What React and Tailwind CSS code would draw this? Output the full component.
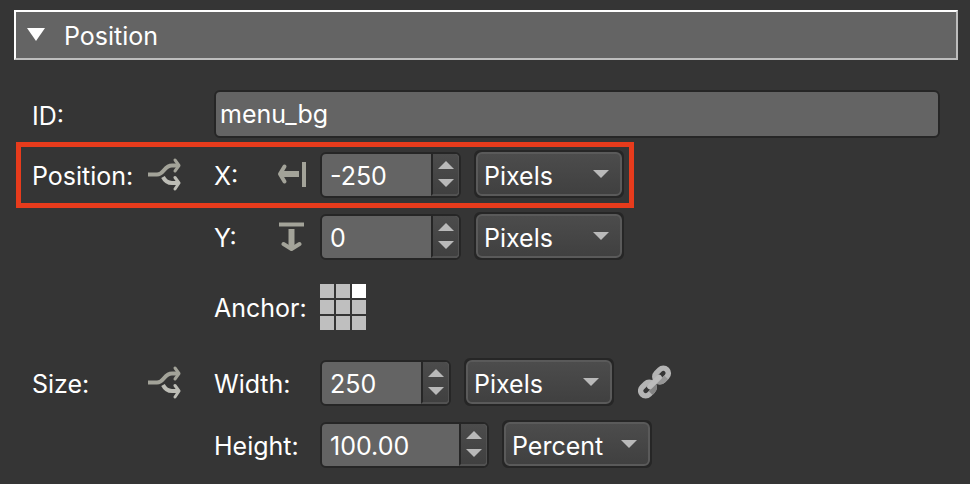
import React, { useId, useState } from 'react';

const ANCHORS = [
  'Top left', 'Top', 'Top right',
  'Left', 'Center', 'Right',
  'Bottom left', 'Bottom', 'Bottom right',
];

function BranchIcon() {
  return (
    <svg viewBox="0 0 34 34" className="w-[34px] h-[34px]" fill="none" aria-hidden="true">
      <path d="M15 20c2 4 5 6 9 6h6" stroke="#bdbdb6" strokeWidth="4" />
      <path d="M27 20.500l4 5.500-4 6" stroke="#bdbdb6" strokeWidth="3" strokeLinecap="round" strokeLinejoin="round" />
      <path d="M0 17.500h9c7 0 7-9 15-9h6" stroke="#a3a399" strokeWidth="4" />
      <path d="M27 3l4 5.500-4 5.500" stroke="#a3a399" strokeWidth="3" strokeLinecap="round" strokeLinejoin="round" />
    </svg>
  );
}

function OffsetIcon({ axis }) {
  return (
    <svg viewBox="0 0 30 30" className="w-[30px] h-[30px]" fill="none" stroke="#a3a399" aria-hidden="true">
      {axis === 'x' ? (
        <>
          <path d="M27 3v25" strokeWidth="4" />
          <path d="M22 15H4" strokeWidth="6" />
          <path d="M7.500 7.500L3 15l4.500 7.500" strokeWidth="4" strokeLinecap="round" strokeLinejoin="round" />
        </>
      ) : (
        <>
          <path d="M2 3.500h25" strokeWidth="4" />
          <path d="M14.500 8v19" strokeWidth="6" />
          <path d="M6.500 23l8 5 8-5" strokeWidth="4" strokeLinecap="round" strokeLinejoin="round" />
        </>
      )}
    </svg>
  );
}

function ChainIcon() {
  return (
    <svg viewBox="0 0 34 34" className="w-[34px] h-[34px]" fill="none" aria-hidden="true">
      <g transform="rotate(-45 16.500 17)" strokeWidth="5.500">
        <rect x="-1" y="12" width="15" height="10" rx="5" stroke="#b4b4b4" />
        <path d="M6 22h3a5 5 0 0 0 5-5" stroke="#858585" />
        <rect x="19" y="12" width="15" height="10" rx="5" stroke="#b4b4b4" />
        <path d="M28 22h-4a5 5 0 0 1-5-5" stroke="#969696" />
        <path d="M10 17h13" stroke="#bcbcbc" strokeLinecap="round" />
      </g>
    </svg>
  );
}

function SpinBox({ id, initial, decimals = 0, inputClass }) {
  const [value, setValue] = useState(initial);
  const step = (delta) => setValue((v) => ((Number(v) || 0) + delta).toFixed(decimals));

  return (
    <div className="flex h-[46px] shrink-0 overflow-hidden rounded-md border-2 border-[#262626] bg-[#646464]">
      <input
        id={id}
        type="text"
        inputMode="decimal"
        value={value}
        onChange={(e) => setValue(e.target.value)}
        className={`min-w-0 bg-transparent pt-1 pl-2 outline-none ${inputClass}`}
      />
      <div className="flex w-7 flex-col rounded-r-sm border-l-2 border-l-[#262626] border-r border-b-2 border-r-[#525252] border-b-[#525252] bg-linear-to-b from-[#4c4c4c] to-[#404040]">
        <button type="button" aria-label="Increase" onClick={() => step(1)} className="flex flex-1 items-end justify-center pb-[3px]">
          <svg viewBox="0 0 16 8" className="h-2 w-4" fill="#b9b9b9" aria-hidden="true">
            <path d="M0 8L8 0l8 8z" />
          </svg>
        </button>
        <button type="button" aria-label="Decrease" onClick={() => step(-1)} className="flex flex-1 items-start justify-center pt-[7px]">
          <svg viewBox="0 0 16 8" className="h-2 w-4" fill="#b9b9b9" aria-hidden="true">
            <path d="M0 0l8 8 8-8z" />
          </svg>
        </button>
      </div>
    </div>
  );
}

function UnitSelect({ label, initial }) {
  return (
    <div className="relative ml-[13px] h-12 w-[150px] shrink-0 rounded-md border-2 border-[#262626] bg-[#262626]">
      <select
        aria-label={label}
        defaultValue={initial}
        className="h-full w-full appearance-none rounded-md border-2 border-[#5a5a5a] bg-linear-to-b from-[#4c4c4c] to-[#404040] pt-1 pl-1.5 outline-none"
      >
        <option>Pixels</option>
        <option>Percent</option>
      </select>
      <svg viewBox="0 0 16 8" className="pointer-events-none absolute right-[13px] top-[18px] h-2 w-4" fill="#b9b9b9" aria-hidden="true">
        <path d="M0 0l8 8 8-8z" />
      </svg>
    </div>
  );
}

// caption | branch button | sub label | controls
function Row({ caption, branch, label, htmlFor, icon, className = '', children }) {
  return (
    <div className={`relative flex items-end ${className}`}>
      <span className="flex h-12 w-[116px] shrink-0 items-center pt-1.5">{caption}</span>
      <span className="flex h-12 w-[66px] shrink-0 items-center">
        {branch && (
          <button type="button" aria-label={branch}>
            <BranchIcon />
          </button>
        )}
      </span>
      <span className="flex h-12 w-[106px] shrink-0 items-center justify-between pr-[13px]">
        <label htmlFor={htmlFor} className="pt-1.5 whitespace-nowrap">{label}</label>
        {icon}
      </span>
      {children}
    </div>
  );
}

export default function App() {
  const uid = useId();
  const [open, setOpen] = useState(true);
  const [anchor, setAnchor] = useState('Top right');
  const [name, setName] = useState('menu_bg');

  return (
    <div className="min-h-screen bg-[#353535] pt-2.5 font-['Inter','Liberation_Sans',sans-serif] text-[25px] text-white">
      <div className="pr-3 pl-3.5">
        <button
          type="button"
          aria-expanded={open}
          onClick={() => setOpen(!open)}
          className="flex h-[50px] w-full items-center gap-[18px] border-2 border-t-white border-r-[#bdbdbd] border-b-[#bdbdbd] border-l-white bg-[#646464] pl-[10px] text-left"
        >
          <svg viewBox="0 0 20 18" className={`h-[18px] w-5 ${open ? '' : '-rotate-90'}`} fill="#fff" aria-hidden="true">
            <path d="M1 2h18l-9 13z" />
          </svg>
          <span className="pt-1">Position</span>
        </button>
      </div>

      {open && (
        <div className="pt-[30px] pr-[30px] pl-8">
          <div className="flex">
            <label htmlFor={`${uid}-id`} className="flex h-12 w-[182px] shrink-0 items-center pt-1.5">ID:</label>
            <input
              id={`${uid}-id`}
              type="text"
              value={name}
              onChange={(e) => setName(e.target.value)}
              className="h-12 min-w-0 flex-1 rounded-md border-2 border-[#262626] bg-[#646464] px-1 outline-none"
            />
          </div>

          <Row className="mt-3" caption="Position:" branch="Position overrides" label="X:" htmlFor={`${uid}-x`} icon={<OffsetIcon axis="x" />}>
            <SpinBox id={`${uid}-x`} initial="-250" inputClass="w-[109px]" />
            <UnitSelect label="X unit" initial="Pixels" />
            <span className="pointer-events-none absolute -top-2 -bottom-2.5 -left-4 w-[618px] border-[5px] border-[#e73b1c]" />
          </Row>
          <Row className="mt-3.5" label="Y:" htmlFor={`${uid}-y`} icon={<OffsetIcon axis="y" />}>
            <SpinBox id={`${uid}-y`} initial="0" inputClass="w-[109px]" />
            <UnitSelect label="Y unit" initial="Pixels" />
          </Row>

          <div className="mt-6 flex items-center pl-[182px]">
            <span id={`${uid}-anchor`} className="w-[106px] pt-1">Anchor:</span>
            <div role="radiogroup" aria-labelledby={`${uid}-anchor`} className="grid grid-cols-3 gap-0.5">
              {ANCHORS.map((a) => (
                <input
                  key={a}
                  type="radio"
                  name={`${uid}-anchor`}
                  aria-label={a}
                  checked={anchor === a}
                  onChange={() => setAnchor(a)}
                  className="block size-3.5 appearance-none bg-[#bfbfbf] checked:bg-white"
                />
              ))}
            </div>
          </div>

          <Row className="mt-7" caption="Size:" branch="Size overrides" label="Width:" htmlFor={`${uid}-w`}>
            <SpinBox id={`${uid}-w`} initial="250" inputClass="w-[99px]" />
            <UnitSelect label="Width unit" initial="Pixels" />
            <button type="button" aria-label="Link width and height" className="ml-6 flex h-12 items-center">
              <ChainIcon />
            </button>
          </Row>
          <Row className="mt-3.5" label="Height:" htmlFor={`${uid}-h`}>
            <SpinBox id={`${uid}-h`} initial="100.00" decimals={2} inputClass="w-[137px]" />
            <UnitSelect label="Height unit" initial="Percent" />
          </Row>
        </div>
      )}
    </div>
  );
}
